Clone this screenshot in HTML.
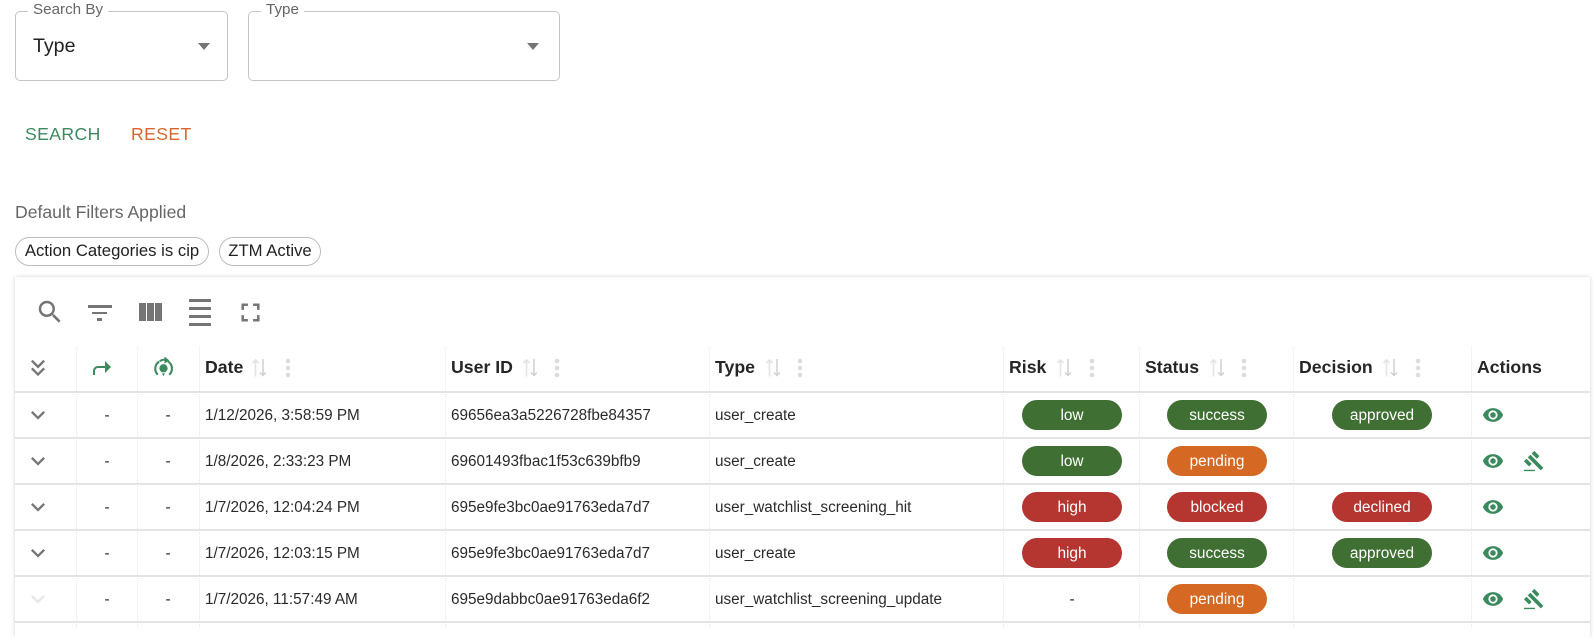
<!DOCTYPE html>
<html lang="en"><head><meta charset="utf-8"><title>Table</title>
<style>
html,body{margin:0;padding:0;background:#fff}
body{width:1594px;height:627px;overflow:hidden;position:relative;font-family:"Liberation Sans",Arial,sans-serif;color:#222}
.a{position:absolute;white-space:nowrap}
.box{position:absolute;border:1.3px solid #c4c4c4;border-radius:5px;box-sizing:border-box;top:11px;height:70px}
.lab{position:absolute;top:1px;background:#fff;padding:0 5px;font-size:15.2px;line-height:18px;color:#666;white-space:nowrap}
.caret{position:absolute;width:0;height:0;border-left:6px solid transparent;border-right:6px solid transparent;border-top:7px solid #757575;top:43px}
.chip{position:absolute;top:237.300px;height:29px;border:1px solid #bdbdbd;border-radius:15px;box-sizing:border-box;font-size:16.7px;line-height:26px;text-align:center;color:#222;white-space:nowrap}
.paper{position:absolute;left:15px;top:277px;width:1575px;height:360px;background:#fff;box-shadow:0 0 4px rgba(0,0,0,.18)}
.h{position:absolute;top:357px;font-size:17.7px;line-height:20px;font-weight:700;color:#262626;white-space:nowrap}
.hl{position:absolute;left:15px;width:1575px;height:2px;background:#e4e4e4}
.v{position:absolute;top:347px;height:280px;width:0;border-left:1px dotted #e8e8e8}
.t{position:absolute;font-size:15.3px;line-height:18px;color:#2a2a2a;white-space:nowrap}
.c{text-align:center;width:40px}
.p{position:absolute;width:100px;height:30px;border-radius:15px;color:#fff;font-size:15.4px;line-height:32px;text-align:center}
.g{background:#3f6f33}.r{background:#b53531}.o{background:#d56823}
.k{position:absolute;background:#757575}
svg{position:absolute;display:block}
</style></head><body>

<div class="box" style="left:15px;width:213px"></div>
<div class="lab" style="left:28px">Search By</div>
<div class="a" style="left:33px;top:35px;font-size:19.6px;line-height:23px;color:#222">Type</div>
<div class="caret" style="left:198px"></div>
<div class="box" style="left:248px;width:312px"></div>
<div class="lab" style="left:261px">Type</div>
<div class="caret" style="left:527px"></div>

<div class="a" style="left:25px;top:124px;font-size:17.6px;line-height:20px;letter-spacing:.4px;color:#3b8a5e">SEARCH</div>
<div class="a" style="left:131px;top:124px;font-size:17.6px;line-height:20px;letter-spacing:.4px;color:#d9662a">RESET</div>

<div class="a" style="left:15px;top:202px;font-size:17.6px;line-height:20px;color:#666">Default Filters Applied</div>
<div class="chip" style="left:15px;width:194px">Action Categories is cip</div>
<div class="chip" style="left:219px;width:102px">ZTM Active</div>

<div class="paper"></div>

<svg style="left:35px;top:297px" width="30" height="30" viewBox="0 0 24 24" fill="#757575"><path d="M15.5 14h-.79l-.28-.27C15.41 12.59 16 11.11 16 9.5 16 5.91 13.09 3 9.5 3S3 5.91 3 9.5 5.91 16 9.5 16c1.61 0 3.09-.59 4.23-1.57l.27.28v.79l5 4.99L20.49 19l-4.99-5zm-6 0C7.01 14 5 11.99 5 9.5S7.01 5 9.500 5 14 7.010 14 9.500 11.990 14 9.500 14z"/></svg>
<div class="k" style="left:88px;top:305px;width:24px;height:2.500px"></div>
<div class="k" style="left:92px;top:311.500px;width:15px;height:2.500px"></div>
<div class="k" style="left:97px;top:318px;width:5px;height:2.500px"></div>
<div class="k" style="left:139px;top:303px;width:7px;height:18px"></div>
<div class="k" style="left:147px;top:303px;width:7px;height:18px"></div>
<div class="k" style="left:155px;top:303px;width:7px;height:18px"></div>
<div class="k" style="left:189px;top:299px;width:22px;height:2.500px"></div>
<div class="k" style="left:189px;top:307px;width:22px;height:2.500px"></div>
<div class="k" style="left:189px;top:315px;width:22px;height:2.500px"></div>
<div class="k" style="left:189px;top:323px;width:22px;height:2.500px"></div>
<svg style="left:234.500px;top:296.500px" width="31" height="31" viewBox="0 0 24 24" fill="#757575"><path d="M7 14H5v5h5v-2H7v-3zm-2-4h2V7h3V5H5v5zm12 7h-3v2h5v-5h-2v3zM14 5v2h3v3h2V5h-5z"/></svg>

<div class="hl" style="top:391px"></div><div class="hl" style="top:437px"></div><div class="hl" style="top:483px"></div><div class="hl" style="top:529px"></div><div class="hl" style="top:575px"></div><div class="hl" style="top:621px"></div>
<div class="v" style="left:76px"></div><div class="v" style="left:137px"></div><div class="v" style="left:199px"></div><div class="v" style="left:445px"></div><div class="v" style="left:709px"></div><div class="v" style="left:1003px"></div><div class="v" style="left:1139px"></div><div class="v" style="left:1293px"></div><div class="v" style="left:1471px"></div>

<svg style="left:24px;top:354px" width="28" height="28" viewBox="0 0 24 24" fill="#757575"><path d="M18 6.410 16.590 5 12 9.580 7.410 5 6 6.410l6 6z"/><path d="M18 13 16.590 11.590 12 16.170 7.410 11.590 6 13l6 6z"/></svg>
<svg style="left:89.500px;top:356px" width="24" height="24" viewBox="0 0 24 24" fill="#3b8a5e"><path d="M21 11l-6-6v5H8c-2.760 0-5 2.240-5 5v4h2v-4c0-1.650 1.350-3 3-3h7v5l6-6z"/></svg>
<svg style="left:152px;top:356px" width="23" height="23" viewBox="0 0 24 24"><path d="M6 19.500a8.800 8.800 0 0 1 1.500-13.700M18 19.500a8.800 8.800 0 0 0-1.500-14" fill="none" stroke="#3b8a5e" stroke-width="2.200"/><path d="M8 5.500a9 9 0 0 1 6.500-1.500" fill="none" stroke="#3b8a5e" stroke-width="2"/><path d="M13 .5l5 4-5 3.500z" fill="#3b8a5e"/><path d="M12 8.500a4.300 4.300 0 0 1 4.300 4.300c0 2-1.500 3.300-2.300 4.200h-4c-.8-.9-2.300-2.200-2.300-4.200A4.300 4.300 0 0 1 12 8.500zM10.500 18h3l-1.500 3z" fill="#3b8a5e"/></svg>

<div class="h" style="left:205px">Date</div>
<div class="h" style="left:451px">User ID</div>
<div class="h" style="left:715px">Type</div>
<div class="h" style="left:1009px">Risk</div>
<div class="h" style="left:1145px">Status</div>
<div class="h" style="left:1299px">Decision</div>
<div class="h" style="left:1477px">Actions</div>

<svg style="left:251px;top:358px" width="15" height="20" viewBox="0 0 15 20" fill="none"><path d="M4.500 18.500V2M1.500 5 4.500 2 7.500 5" stroke="#e4e4e4" stroke-width="1.700"/><path d="M12 1v16.500M9 14.500l3 3 3-3" stroke="#d0d0d0" stroke-width="1.500"/></svg>
<svg style="left:522px;top:358px" width="15" height="20" viewBox="0 0 15 20" fill="none"><path d="M4.500 18.500V2M1.500 5 4.500 2 7.500 5" stroke="#e4e4e4" stroke-width="1.700"/><path d="M12 1v16.500M9 14.500l3 3 3-3" stroke="#d0d0d0" stroke-width="1.500"/></svg>
<svg style="left:765px;top:358px" width="15" height="20" viewBox="0 0 15 20" fill="none"><path d="M4.500 18.500V2M1.500 5 4.500 2 7.500 5" stroke="#e4e4e4" stroke-width="1.700"/><path d="M12 1v16.500M9 14.500l3 3 3-3" stroke="#d0d0d0" stroke-width="1.500"/></svg>
<svg style="left:1056px;top:358px" width="15" height="20" viewBox="0 0 15 20" fill="none"><path d="M4.500 18.500V2M1.500 5 4.500 2 7.500 5" stroke="#e4e4e4" stroke-width="1.700"/><path d="M12 1v16.500M9 14.500l3 3 3-3" stroke="#d0d0d0" stroke-width="1.500"/></svg>
<svg style="left:1209px;top:358px" width="15" height="20" viewBox="0 0 15 20" fill="none"><path d="M4.500 18.500V2M1.500 5 4.500 2 7.500 5" stroke="#e4e4e4" stroke-width="1.700"/><path d="M12 1v16.500M9 14.500l3 3 3-3" stroke="#d0d0d0" stroke-width="1.500"/></svg>
<svg style="left:1382px;top:358px" width="15" height="20" viewBox="0 0 15 20" fill="none"><path d="M4.500 18.500V2M1.500 5 4.500 2 7.500 5" stroke="#e4e4e4" stroke-width="1.700"/><path d="M12 1v16.500M9 14.500l3 3 3-3" stroke="#d0d0d0" stroke-width="1.500"/></svg>

<svg style="left:284px;top:358px" width="8" height="20" viewBox="0 0 8 20" fill="#dcdcdc"><circle cx="4" cy="3" r="2.300"/><circle cx="4" cy="10" r="2.300"/><circle cx="4" cy="17" r="2.300"/></svg>
<svg style="left:553px;top:358px" width="8" height="20" viewBox="0 0 8 20" fill="#dcdcdc"><circle cx="4" cy="3" r="2.300"/><circle cx="4" cy="10" r="2.300"/><circle cx="4" cy="17" r="2.300"/></svg>
<svg style="left:796px;top:358px" width="8" height="20" viewBox="0 0 8 20" fill="#dcdcdc"><circle cx="4" cy="3" r="2.300"/><circle cx="4" cy="10" r="2.300"/><circle cx="4" cy="17" r="2.300"/></svg>
<svg style="left:1088px;top:358px" width="8" height="20" viewBox="0 0 8 20" fill="#dcdcdc"><circle cx="4" cy="3" r="2.300"/><circle cx="4" cy="10" r="2.300"/><circle cx="4" cy="17" r="2.300"/></svg>
<svg style="left:1240px;top:358px" width="8" height="20" viewBox="0 0 8 20" fill="#dcdcdc"><circle cx="4" cy="3" r="2.300"/><circle cx="4" cy="10" r="2.300"/><circle cx="4" cy="17" r="2.300"/></svg>
<svg style="left:1414px;top:358px" width="8" height="20" viewBox="0 0 8 20" fill="#dcdcdc"><circle cx="4" cy="3" r="2.300"/><circle cx="4" cy="10" r="2.300"/><circle cx="4" cy="17" r="2.300"/></svg>

<!-- row 1 -->
<svg style="left:24px;top:401px" width="28" height="28" viewBox="0 0 24 24" fill="#757575"><path d="M16.590 8.590 12 13.170 7.410 8.590 6 10l6 6 6-6z"/></svg>
<div class="t c" style="left:87px;top:407px">-</div><div class="t c" style="left:148px;top:407px">-</div>
<div class="t" style="left:205px;top:407px">1/12/2026, 3:58:59 PM</div>
<div class="t" style="left:451px;top:407px">69656ea3a5226728fbe84357</div>
<div class="t" style="left:715px;top:407px">user_create</div>
<div class="p g" style="left:1022px;top:400px">low</div>
<div class="p g" style="left:1167px;top:400px">success</div>
<div class="p g" style="left:1332px;top:400px">approved</div>
<svg style="left:1481.500px;top:404px" width="22" height="22" viewBox="0 0 24 24" fill="#3b8a5e"><path d="M12 4.500C7 4.500 2.730 7.610 1 12c1.730 4.390 6 7.500 11 7.500s9.270-3.110 11-7.500c-1.730-4.390-6-7.500-11-7.500zM12 17c-2.760 0-5-2.240-5-5s2.240-5 5-5 5 2.240 5 5-2.240 5-5 5zm0-8c-1.660 0-3 1.340-3 3s1.340 3 3 3 3-1.340 3-3-1.340-3-3-3z"/></svg>

<!-- row 2 -->
<svg style="left:24px;top:447px" width="28" height="28" viewBox="0 0 24 24" fill="#757575"><path d="M16.590 8.590 12 13.170 7.410 8.590 6 10l6 6 6-6z"/></svg>
<div class="t c" style="left:87px;top:453px">-</div><div class="t c" style="left:148px;top:453px">-</div>
<div class="t" style="left:205px;top:453px">1/8/2026, 2:33:23 PM</div>
<div class="t" style="left:451px;top:453px">69601493fbac1f53c639bfb9</div>
<div class="t" style="left:715px;top:453px">user_create</div>
<div class="p g" style="left:1022px;top:446px">low</div>
<div class="p o" style="left:1167px;top:446px">pending</div>
<svg style="left:1481.500px;top:450px" width="22" height="22" viewBox="0 0 24 24" fill="#3b8a5e"><path d="M12 4.500C7 4.500 2.730 7.610 1 12c1.730 4.390 6 7.500 11 7.500s9.270-3.110 11-7.500c-1.730-4.390-6-7.500-11-7.500zM12 17c-2.760 0-5-2.240-5-5s2.240-5 5-5 5 2.240 5 5-2.240 5-5 5zm0-8c-1.660 0-3 1.340-3 3s1.340 3 3 3 3-1.340 3-3-1.340-3-3-3z"/></svg>
<svg style="left:1523px;top:450px" width="22" height="22" viewBox="0 0 24 24" fill="#3b8a5e"><path d="M1 21.500h12v1.500H1zM5.245 8.070l2.830-2.827 14.140 14.142-2.828 2.828zM12.317 1l5.657 5.656-2.830 2.830-5.654-5.660zM3.825 9.485l5.657 5.657-2.828 2.828-5.657-5.657z"/></svg>

<!-- row 3 -->
<svg style="left:24px;top:493px" width="28" height="28" viewBox="0 0 24 24" fill="#757575"><path d="M16.590 8.590 12 13.170 7.410 8.590 6 10l6 6 6-6z"/></svg>
<div class="t c" style="left:87px;top:499px">-</div><div class="t c" style="left:148px;top:499px">-</div>
<div class="t" style="left:205px;top:499px">1/7/2026, 12:04:24 PM</div>
<div class="t" style="left:451px;top:499px">695e9fe3bc0ae91763eda7d7</div>
<div class="t" style="left:715px;top:499px">user_watchlist_screening_hit</div>
<div class="p r" style="left:1022px;top:492px">high</div>
<div class="p r" style="left:1167px;top:492px">blocked</div>
<div class="p r" style="left:1332px;top:492px">declined</div>
<svg style="left:1481.500px;top:496px" width="22" height="22" viewBox="0 0 24 24" fill="#3b8a5e"><path d="M12 4.500C7 4.500 2.730 7.610 1 12c1.730 4.390 6 7.500 11 7.500s9.270-3.110 11-7.500c-1.730-4.390-6-7.500-11-7.500zM12 17c-2.760 0-5-2.240-5-5s2.240-5 5-5 5 2.240 5 5-2.240 5-5 5zm0-8c-1.660 0-3 1.340-3 3s1.340 3 3 3 3-1.340 3-3-1.340-3-3-3z"/></svg>

<!-- row 4 -->
<svg style="left:24px;top:539px" width="28" height="28" viewBox="0 0 24 24" fill="#757575"><path d="M16.590 8.590 12 13.170 7.410 8.590 6 10l6 6 6-6z"/></svg>
<div class="t c" style="left:87px;top:545px">-</div><div class="t c" style="left:148px;top:545px">-</div>
<div class="t" style="left:205px;top:545px">1/7/2026, 12:03:15 PM</div>
<div class="t" style="left:451px;top:545px">695e9fe3bc0ae91763eda7d7</div>
<div class="t" style="left:715px;top:545px">user_create</div>
<div class="p r" style="left:1022px;top:538px">high</div>
<div class="p g" style="left:1167px;top:538px">success</div>
<div class="p g" style="left:1332px;top:538px">approved</div>
<svg style="left:1481.500px;top:542px" width="22" height="22" viewBox="0 0 24 24" fill="#3b8a5e"><path d="M12 4.500C7 4.500 2.730 7.610 1 12c1.730 4.390 6 7.500 11 7.500s9.270-3.110 11-7.500c-1.730-4.390-6-7.500-11-7.500zM12 17c-2.760 0-5-2.240-5-5s2.240-5 5-5 5 2.240 5 5-2.240 5-5 5zm0-8c-1.660 0-3 1.340-3 3s1.340 3 3 3 3-1.340 3-3-1.340-3-3-3z"/></svg>

<!-- row 5 -->
<svg style="left:24px;top:585px" width="28" height="28" viewBox="0 0 24 24" fill="#e6e6e6"><path d="M16.590 8.590 12 13.170 7.410 8.590 6 10l6 6 6-6z"/></svg>
<div class="t c" style="left:87px;top:591px">-</div><div class="t c" style="left:148px;top:591px">-</div>
<div class="t" style="left:205px;top:591px">1/7/2026, 11:57:49 AM</div>
<div class="t" style="left:451px;top:591px">695e9dabbc0ae91763eda6f2</div>
<div class="t" style="left:715px;top:591px">user_watchlist_screening_update</div>
<div class="t c" style="left:1052px;top:591px">-</div>
<div class="p o" style="left:1167px;top:584px">pending</div>
<svg style="left:1481.500px;top:588px" width="22" height="22" viewBox="0 0 24 24" fill="#3b8a5e"><path d="M12 4.500C7 4.500 2.730 7.610 1 12c1.730 4.390 6 7.500 11 7.500s9.270-3.110 11-7.500c-1.730-4.390-6-7.500-11-7.500zM12 17c-2.760 0-5-2.240-5-5s2.240-5 5-5 5 2.240 5 5-2.240 5-5 5zm0-8c-1.660 0-3 1.340-3 3s1.340 3 3 3 3-1.340 3-3-1.340-3-3-3z"/></svg>
<svg style="left:1523px;top:588px" width="22" height="22" viewBox="0 0 24 24" fill="#3b8a5e"><path d="M1 21.500h12v1.500H1zM5.245 8.070l2.830-2.827 14.140 14.142-2.828 2.828zM12.317 1l5.657 5.656-2.830 2.830-5.654-5.660zM3.825 9.485l5.657 5.657-2.828 2.828-5.657-5.657z"/></svg>

</body></html>
